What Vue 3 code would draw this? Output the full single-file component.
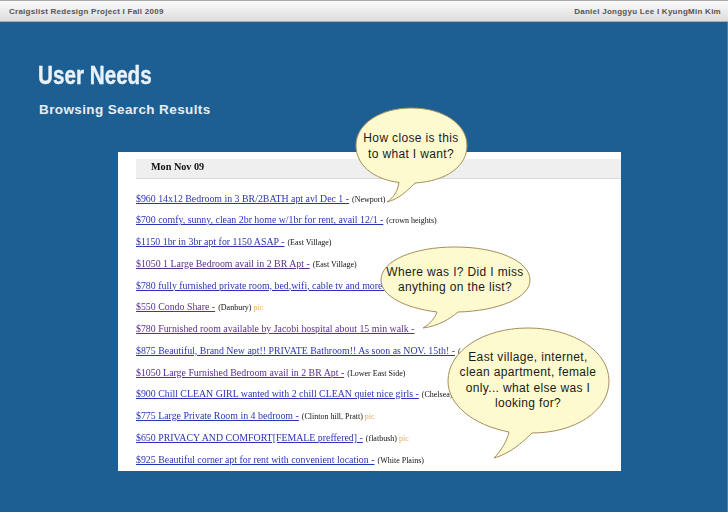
<script setup>
const rows = [
  { t: '$960 14x12 Bedroom in 3 BR/2BATH apt avl Dec 1 -', l: '(Newport)' },
  { t: '$700 comfy, sunny, clean 2br home w/1br for rent, avail 12/1 -', l: '(crown heights)' },
  { t: '$1150 1br in 3br apt for 1150 ASAP -', l: '(East Village)' },
  { t: '$1050 1 Large Bedroom avail in 2 BR Apt -', l: '(East Village)', v: true },
  { t: '$780 fully furnished private room, bed,wifi, cable tv and more -', l: '' },
  { t: '$550 Condo Share -', l: '(Danbury)', p: true, v: true },
  { t: '$780 Furnished room available by Jacobi hospital about 15 min walk -', l: '', v: true },
  { t: '$875 Beautiful, Brand New apt!! PRIVATE Bathroom!! As soon as NOV. 15th! -', l: '(' },
  { t: '$1050 Large Furnished Bedroom avail in 2 BR Apt -', l: '(Lower East Side)', v: true },
  { t: '$900 Chill CLEAN GIRL wanted with 2 chill CLEAN quiet nice girls -', l: '(Chelsea)' },
  { t: '$775 Large Private Room in 4 bedroom -', l: '(Clinton hill, Pratt)', p: true },
  { t: '$650 PRIVACY AND COMFORT[FEMALE preffered] -', l: '(flatbush)', p: true },
  { t: '$925 Beautiful corner apt for rent with convenient location -', l: '(White Plains)' }
]
const bubbles = [
  { c: 'b1', w: 113, h: 97, d: 'M44 75.5C18 72 1 58 1 38.5 1 17 25 1 56.5 1S112 17 112 38.5C112 59 92 74 60 76 52 84 44 92 32 95 40 90 43 82 44 75.5Z', lines: ['How close is this', 'to what I want?'] },
  { c: 'b2', w: 151, h: 84, d: 'M57 66C25 62 1 50 1 34 1 15 33 1 75 1S150 15 150 34C150 52 118 65 78 66 70 73 58 80 43 82 50 78 55 72 57 66Z', lines: ['Where was I? Did I miss', 'anything on the list?'] },
  { c: 'b3', w: 163, h: 133, d: 'M62 105C26 98 1 78 1 54 1 24 36 1 81 1S162 24 162 54C162 84 128 106 85 106 75 116 62 127 47 131 54 124 60 114 62 105Z', lines: ['East village, internet,', 'clean apartment, female', 'only... what else was I', 'looking for?'] }
]
</script>

<template>
  <div class="slide">
    <header class="bar">
      <span>Craigslist Redesign Project I Fall 2009</span>
      <span>Daniel Jonggyu Lee I KyungMin Kim</span>
    </header>
    <main class="content">
      <h1 class="title">User Needs</h1>
      <h2 class="sub">Browsing Search Results</h2>
      <section class="shot">
        <div class="date">Mon Nov 09</div>
        <ul class="list">
          <li v-for="r in rows" :key="r.t" class="row">
            <a :class="{ visited: r.v }">{{ r.t }}</a>
            <small v-if="r.l">{{ r.l }}</small>
            <em v-if="r.p">pic</em>
          </li>
        </ul>
      </section>
    </main>
    <div v-for="b in bubbles" :key="b.c" class="bubble" :class="b.c">
      <svg :width="b.w" :height="b.h" :viewBox="`0 0 ${b.w} ${b.h}`">
        <path :d="b.d" />
      </svg>
      <p class="say"><span v-for="l in b.lines" :key="l">{{ l }}</span></p>
    </div>
  </div>
</template>

<style>
html, body { margin: 0; padding: 0; }
</style>

<style scoped>
.slide {
  position: relative;
  width: 728px;
  height: 512px;
  overflow: hidden;
  background: #1d5e93;
  font-family: "Liberation Sans", Arial, sans-serif;
  display: flex;
  flex-direction: column;
}
.bar {
  height: 20px;
  box-sizing: content-box;
  border-top: 1px solid #a9a9a9;
  border-bottom: 1px solid #a5adb3;
  background: linear-gradient(#fbfbfb, #dcdcdc);
  display: flex;
  justify-content: space-between;
  align-items: center;
  padding: 0 7px 0 9px;
  font-size: 8px;
  font-weight: 700;
  letter-spacing: 0.26px;
  color: #555;
}
.content {
  flex: 1;
  display: flex;
  flex-direction: column;
  align-items: flex-start;
  box-shadow: inset -1px 0 0 #4f83ac;
}
.title {
  margin: 38px 0 0 38px;
  font-size: 26px;
  line-height: 30px;
  font-weight: 700;
  color: #e9f2f9;
  -webkit-text-stroke: 0.4px #e9f2f9;
  transform: scaleX(0.795);
  transform-origin: left center;
  white-space: nowrap;
}
.sub {
  margin: 12px 0 0 39px;
  font-size: 13.5px;
  line-height: 16px;
  font-weight: 700;
  letter-spacing: 0.38px;
  color: #e4edf4;
}
.shot {
  margin: 34px 0 0 118px;
  width: 503px;
  height: 319px;
  background: #fff;
  overflow: hidden;
  font-family: "Liberation Serif", "Times New Roman", serif;
  filter: blur(0.3px);
}
.date {
  margin: 7px 0 0 18px;
  height: 19px;
  line-height: 16px;
  padding-left: 15px;
  background: #efefef;
  border-bottom: 1px solid #d8d8d8;
  font-size: 10.2px;
  font-weight: 700;
  color: #111;
}
.list {
  list-style: none;
  margin: 8.5px 0 0;
  padding: 0 0 0 18px;
}
.row {
  height: 21.75px;
  line-height: 21px;
  white-space: nowrap;
  font-size: 9.87px;
}
.row a {
  color: #2a35b5;
  text-decoration: underline;
}
.row a.visited { color: #5b2f8f; }
.row small {
  margin-left: 3px;
  font-size: 8px;
  color: #111;
}
.row em {
  margin-left: 2px;
  font-style: normal;
  font-size: 8px;
  color: #e3ac5a;
}
.bubble {
  position: absolute;
}
.bubble svg {
  display: block;
}
.bubble path {
  fill: #fefad0;
  stroke: #a58f5c;
  stroke-width: 1;
}
.b1 { left: 354.5px; top: 106.5px; }
.b2 { left: 379.5px; top: 245.5px; }
.b3 { left: 446.5px; top: 326.5px; }
.say {
  position: absolute;
  left: 0;
  right: 0;
  margin: 0;
  display: flex;
  flex-direction: column;
  align-items: center;
  color: #1a1a1a;
  white-space: nowrap;
  font-size: 12px;
  letter-spacing: 0.35px;
}
.b1 .say { top: 23px; line-height: 16px; }
.b2 .say { top: 19px; line-height: 15.5px; }
.b3 .say { top: 23px; line-height: 15.6px; }
</style>
